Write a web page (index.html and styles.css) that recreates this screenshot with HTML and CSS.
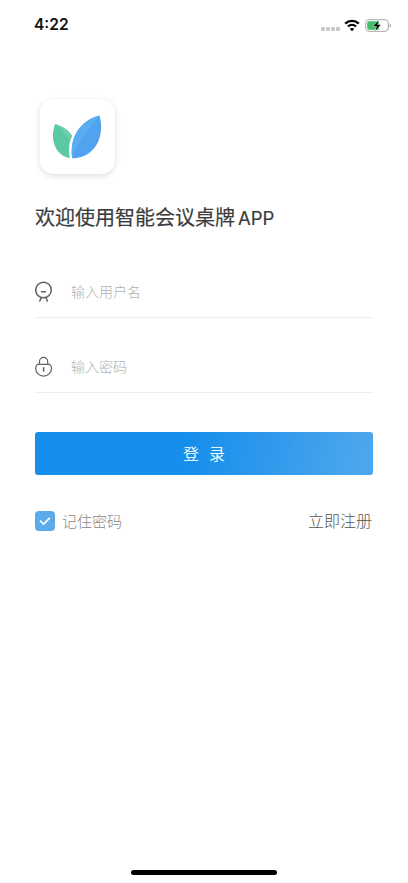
FILE: index.html
```html
<!DOCTYPE html>
<html lang="zh-CN">
<head>
<meta charset="utf-8">
<meta name="viewport" content="width=device-width, initial-scale=1">
<title>登录</title>
<link rel="stylesheet" href="styles.css">
</head>
<body>
<div class="screen">
  <header class="status">
    <span class="time">4:22</span>
    <div class="indicators">
      <span class="dots"><i></i><i></i><i></i><i></i></span>
      <svg class="wifi" width="16" height="13" viewBox="0 0 16 13" fill="none" stroke="#000">
        <path d="M1.2 4.600C5 .9 11 .9 14.800 4.600" stroke-width="2.300"/>
        <path d="M3.900 7.500c2.400-2.200 5.800-2.200 8.200 0" stroke-width="2.100"/>
        <path d="M8 12.200 5.700 9.800c1.300-1.100 3.300-1.100 4.600 0z" fill="#000" stroke="none"/>
      </svg>
      <svg class="battery" width="27" height="13" viewBox="0 0 27 13">
        <rect x=".7" y=".7" width="22.600" height="11.600" rx="3.300" fill="#fff" stroke="#a5aaa6"/>
        <path d="M4.200 2.200H14v8.600H4.200a2 2 0 0 1-2-2V4.200a2 2 0 0 1 2-2z" fill="#43bd67"/>
        <path d="M24.600 4.400c1.600.5 1.600 3.700 0 4.200z" fill="#999"/>
        <path d="M13.400 1.500 8.300 7.200h3.500l-1.300 4.500 5.300-6h-3.600z" fill="#000" stroke="#fff" stroke-width=".7" paint-order="stroke"/>
      </svg>
    </div>
  </header>
  <main class="login">
    <div class="logo">
      <svg width="75" height="75" viewBox="0 -0.8 75 75">
        <path d="M15 24.500C23.500 26.500 29 31 32 36c-3.400 6.800-3.200 14-2.200 22.200C17 56.500 9 41.500 15 24.500z" fill="#5bc8a5"/>
        <path d="M15 24.500C23.500 26.500 29 31 32 36l-2 6C26 35 20.500 29.500 15 24.500z" fill="#69cfae"/>
        <path d="M59.500 15.800C41.500 20.500 29 36.500 32.200 58.500 52.500 59 66 39 59.500 15.800z" fill="#51a3ef"/>
        <path d="M59.500 15.800C41.500 20.500 29 36.500 32.200 58.500 35 45 46.500 34 59.500 15.800z" fill="#5badf2"/>
      </svg>
    </div>
    <h1 class="title">欢迎使用智能会议桌牌<span class="latin">APP</span></h1>
    <label class="field">
      <svg width="18" height="22" viewBox="0 0 18 22" fill="none" stroke="#606060" stroke-width="1.500" stroke-linecap="round">
        <circle cx="8.500" cy="9" r="7.800"/>
        <path d="M6.500 10.800h4M6.200 17l-1.400 3M11 17l1.400 3"/>
      </svg>
      <input type="text" placeholder="输入用户名">
    </label>
    <label class="field">
      <svg width="18" height="22" viewBox="0 0 18 22" fill="none" stroke="#646464" stroke-width="1.200">
        <path d="M4.500 8.300V5.500a4.100 4.100 0 0 1 8.200 0v2.800"/>
        <path d="M2.600 8.300h12c1.300 1 1.900 2.300 1.900 3.900 0 4.600-3.600 8-7.900 8s-7.900-3.400-7.900-8c0-1.600.6-2.900 1.900-3.900z"/>
        <path d="M8.600 11.200v4.500" stroke-width="1.600"/>
      </svg>
      <input type="password" placeholder="输入密码">
    </label>
    <button class="submit" type="button"><span>登</span><span>录</span></button>
    <div class="options">
      <div class="remember">
        <svg width="20" height="20" viewBox="0 0 20 20">
          <rect width="20" height="20" rx="4" fill="#5babea"/>
          <path d="m5 9.700 3.600 3.400 6.200-6.200" fill="none" stroke="#fff" stroke-width="1.600"/>
        </svg>
        <span>记住密码</span>
      </div>
      <a class="register">立即注册</a>
    </div>
  </main>
  <div class="home-bar"></div>
</div>
</body>
</html>
```
FILE: styles.css
```css
* { box-sizing: border-box; }

body {
  margin: 0;
  background: #fff;
  font-family: "Noto Sans CJK SC", sans-serif;
}

.screen {
  display: flex;
  flex-direction: column;
  height: 883px;
  padding-bottom: 8px;
  overflow: hidden;
}

.status {
  display: flex;
  justify-content: space-between;
  align-items: center;
  height: 50px;
  padding: 0 16px 0 34px;
}

.time {
  font: 600 15.500px/20px Inter, sans-serif;
  color: #111;
}

.indicators { display: flex; align-items: center; }
.dots { display: flex; gap: 1px; margin: 7px 4px 0 0; }
.dots i { width: 4px; height: 4px; border-radius: 1px; background: #c8c8c8; }
.battery { margin-left: 5px; }

.login {
  flex: 1;
  display: flex;
  flex-direction: column;
  padding: 49px 35px 0;
}

.logo {
  width: 75px;
  height: 75px;
  margin-left: 5px;
  border-radius: 14px;
  background: #fff;
  box-shadow: 0 2px 6px rgba(0, 0, 0, .13);
}

.logo svg { display: block; }

.title {
  margin: 28px 0 0;
  font-size: 20px;
  line-height: 30px;
  font-weight: 400;
  color: #3c3c3c;
  -webkit-text-stroke: .2px #3c3c3c;
  white-space: nowrap;
}

.latin { margin-left: 3px; font-family: Inter, sans-serif; font-size: 18.500px; }

.field {
  display: flex;
  align-items: center;
  gap: 18px;
  height: 75px;
  padding-top: 24px;
  border-bottom: 1px solid #eee;
}

.title + .field { margin-top: 10px; }

.field input {
  flex: 1;
  min-width: 0;
  height: 24px;
  margin-bottom: 3px;
  padding: 0;
  border: 0;
  outline: 0;
  font: 300 14px/24px "Noto Sans CJK SC", sans-serif;
}

.field input::placeholder { color: #b0b0b0; opacity: 1; }

.submit {
  display: flex;
  justify-content: center;
  align-items: center;
  gap: 10px;
  height: 43px;
  margin-top: 39px;
  padding: 0 0 1px;
  border: 0;
  border-radius: 3px;
  background: linear-gradient(100deg, #168eec 0%, #168eec 45%, #4ba6ed 95%);
  color: #e4fbff;
  font: 16px/24px "Noto Sans CJK SC", sans-serif;
}

.options {
  display: flex;
  justify-content: space-between;
  align-items: center;
  height: 24px;
  margin-top: 34px;
}

.remember {
  display: flex;
  align-items: center;
  gap: 7px;
  font-size: 15px;
  font-weight: 300;
  line-height: 24px;
  color: #888;
}

.register {
  margin: 0 1px 2px 0;
  font-size: 16px;
  font-weight: 300;
  line-height: 24px;
  color: #555;
}

.home-bar {
  width: 146px;
  height: 5px;
  margin: 0 auto;
  border-radius: 3px;
  background: #000;
}
```
